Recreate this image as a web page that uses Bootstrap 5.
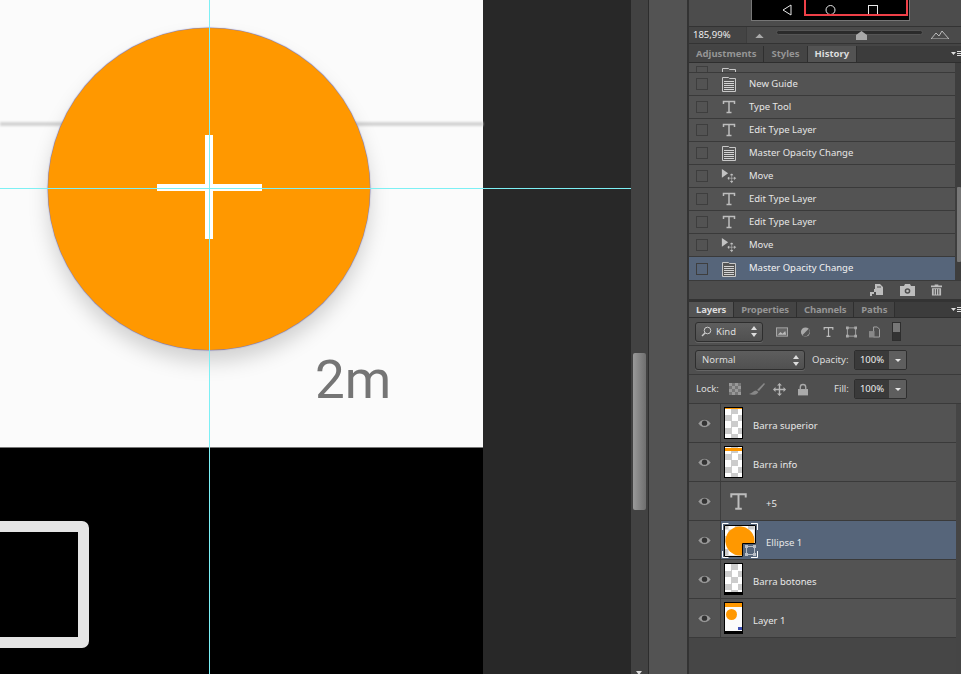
<!DOCTYPE html>
<html lang="en">
<head>
<meta charset="UTF-8" />
<title>Photoshop</title>
<link href="https://cdn.jsdelivr.net/npm/bootstrap@5.3.0/dist/css/bootstrap.min.css" rel="stylesheet" />
<style>
html, body { height: 100%; }
body { width: 961px; height: 674px; overflow: hidden; background: #535353; font-family: "Noto Sans", "Liberation Sans", sans-serif; font-size: 9.5px; color: #e6e6e6; }
.canvas-area { width: 631px; height: 674px; background: #282828; position: relative; overflow: hidden; flex: none; }
.doc-white { width: 483px; height: 448px; background: #fbfbfb; border-bottom: 1px solid #777; }
.doc-black { width: 483px; height: 226px; background: #000; }
.app-line { position: absolute; left: 0; top: 122px; width: 483px; height: 4px; background: #d4d4d4; filter: blur(1px); }
.fab { position: absolute; left: 48px; top: 28px; width: 322px; height: 322px; border-radius: 50%; background: #ff9800; box-shadow: 0 0 1px .5px #7a74b0, 0 12px 20px rgba(0,0,0,.17); }
.plus-v { position: absolute; left: 205px; top: 135px; width: 8px; height: 104px; background: #fff; }
.plus-h { position: absolute; left: 157px; top: 184px; width: 105px; height: 7px; background: #fff; }
.time-label { position: absolute; left: 315px; top: 346px; font: 53px/1.3 Roboto, sans-serif; color: #757575; filter: blur(.4px); }
.nav-square { position: absolute; left: -60px; top: 521px; width: 149px; height: 127px; border: 11px solid #e4e4e4; border-radius: 7px; filter: blur(.3px); }
.guide-v { position: absolute; left: 209px; top: 0; width: 1px; height: 674px; background: #7df0f5; }
.guide-h { position: absolute; left: 0; top: 188px; width: 631px; height: 1px; background: #7df0f5; }
.v-gutter { width: 18px; height: 674px; background: #424242; border-right: 1px solid #2d2d2d; position: relative; flex: none; }
.v-thumb { position: absolute; left: 2px; top: 353px; width: 13px; height: 157px; border-radius: 2px; background: linear-gradient(90deg, #999, #6f6f6f); }
.v-arrow { position: absolute; left: 5px; top: 671px; border: 3px solid transparent; border-top: 4px solid #ddd; }
.dock-strip { width: 40px; height: 674px; background: #535353; border-right: 2px solid #333; flex: none; }
.side-panel { width: 272px; height: 674px; background: #454545; flex: none; }
.nav-preview { height: 26px; background: #4c4c4c; padding-left: 62px; flex: none; }
.nav-black { width: 159px; height: 21px; background: #000; border: 1px solid #777; border-top: 0; position: relative; }
.nav-red { position: absolute; left: 52px; top: -2px; width: 104px; height: 18px; border: 2px solid #ef4048; }
.nav-glyph { position: absolute; top: 4px; }
.zoom-row { height: 18px; background: #4a4a4a; border-top: 1px solid #333; border-bottom: 1px solid #333; flex: none; }
.zoom-val { width: 58px; padding-left: 4px; color: #eee; background: #444; height: 100%; line-height: 16px; border-right: 1px solid #3d3d3d; }
.zoom-track { width: 147px; height: 5px; margin: 0 8px 5px 12px; background: #2b2b2b; border: 1px solid #555; border-radius: 3px; position: relative; }
.zoom-knob { position: absolute; left: 79px; top: 0; }
.tab-strip { height: 17px; background: #3c3c3c; margin-top: 2px; flex: none; position: relative; border-bottom: 1px solid #2e2e2e; }
.tab-item { height: 100%; padding: 0 7px; line-height: 15px; color: #959595; font-weight: 700; background: #444; border-right: 1px solid #2f2f2f; }
.tab-item.active-tab { background: #535353; color: #ddd; }
.layer-tabs { height: 16px; margin-top: 0; }
.layer-tabs .tab-item { letter-spacing: -.15px; }
.tab-menu { position: absolute; right: 0; top: 4px; }
.hist-wrap { height: 217px; flex: none; }
.hist-list { flex: 1; overflow: hidden; }
.hist-scroll { width: 6px; background: #3e3e3e; padding-top: 124px; flex: none; }
.hist-thumb { height: 75px; margin-left: 2px; background: #777; border-radius: 1px; }
.hist-row { height: 23px; background: #535353; border-bottom: 1px solid #3a3a3a; padding-left: 7px; }
.hist-row.clip-row { height: 10px; align-items: flex-end !important; overflow: hidden; }
.hist-row.sel-row { background: #56657a; border-bottom: 0; color: #f2f2f2; }
.hist-box { width: 12px; height: 12px; border: 1px solid #3e3e3e; margin-right: 13px; flex: none; }
.hist-ico { width: 16px; height: 16px; margin-right: 12px; flex: none; }
.hist-foot { height: 19px; background: #4d4d4d; border-top: 1px solid #3a3a3a; padding-right: 19px; flex: none; gap: 16px; }
.gap-bar { height: 3px; background: #333; flex: none; }
.tool-row { background: #4f4f4f; border-bottom: 1px solid #3a3a3a; flex: none; padding-left: 6px; }
.sel-field { background: linear-gradient(#5e5e5e, #505050); border: 1px solid #2e2e2e; border-radius: 3px; height: 20px; color: #ddd; padding: 0 5px; line-height: 18px; box-shadow: 0 1px 0 #666; }
.sel-field.blend-field { width: 110px; padding-left: 6px; }
.updown { margin-left: auto; flex: none; }
.filter-icons { margin-left: 13px; gap: 12px; }
.filter-toggle { width: 9px; height: 19px; background: linear-gradient(#777 50%, #333 50%); border: 1px solid #2e2e2e; }
.opa-label { margin-left: 7px; width: 42px; color: #ddd; }
.lock-label { width: 34px; color: #ddd; padding-left: 1px; }
.lock-icons { gap: 8px; width: 105px; }
.lock-check { width: 12px; height: 12px; background-image: conic-gradient(#777 25%, #999 0 50%, #777 0 75%, #999 0); background-size: 6px 6px; }
.fill-label { width: 20px; color: #ddd; }
.num-field { width: 53px; height: 20px; border: 1px solid #2e2e2e; border-radius: 2px; overflow: hidden; flex: none; }
.num-val { width: 34px; background: #3a3a3a; color: #eee; text-align: center; line-height: 18px; }
.num-btn { flex: 1; background: #5e5e5e; position: relative; }
.num-btn::after { content: ""; position: absolute; left: 6px; top: 8px; border: 3px solid transparent; border-top: 3px solid #e6e6e6; }
.layer-row { height: 39px; background: #535353; border-bottom: 1px solid #3a3a3a; margin-right: 5px; }
.layer-row.sel-row { background: #56657a; }
.eye-cell { width: 32px; height: 100%; background: #535353; border-right: 1px solid #3d3d3d; flex: none; }
.thumb-cell { width: 29px; margin-left: 3px; flex: none; }
.thumb-cell.wide-cell { width: 42px; }
.mini-thumb { width: 19px; height: 32px; border: 1px solid #000; background-color: #fff; background-image: conic-gradient(#ccc 25%, #fff 0 50%, #ccc 0 75%, #fff 0); background-size: 13px 13px; position: relative; overflow: hidden; display: block; }
.mini-thumb.photo-thumb { background: #fbfbfb; }
.layer-name { color: #e8e8e8; margin-top: 6px; }
.type-thumb { margin-left: 7px; margin-right: 17px; flex: none; }
.orange-strip { position: absolute; left: 0; right: 0; background: #ff9800; }
.mask-thumb { width: 36px; height: 35px; margin-left: -2px; }
.layer-foot { flex: 1; background: #464646; margin-right: 5px; }
</style>
</head>
<body class="d-flex">
  <svg width="0" height="0" class="position-absolute">
    <symbol id="ico-doc" viewBox="0 0 16 16"><path d="M1.500 1.500h6l1 1h6v13h-13z" fill="#555" stroke="#c8c8c8"/><path d="M3 5.500h10M3 7.500h10M3 9.500h10M3 11.500h10M3 13.500h10" stroke="#d4d4d4"/></symbol>
    <symbol id="ico-type" viewBox="0 0 16 16"><path d="M2.500 5V2.500h11V5M8 2.500v11M5.500 13.500h5" fill="none" stroke="#bdbdbd" stroke-width="1.500"/></symbol>
    <symbol id="ico-move" viewBox="0 0 18 16"><path d="M1 0l7 5-7 5z" fill="#c4c4c4"/><path d="M12 6v9M8 10.500h8M12 5.500l-1.500 1.500h3zM12 15.500l-1.500-1.500h3zM7.500 10.500l1.500-1.500v3zM16.500 10.500l-1.500-1.500v3z" fill="#c4c4c4" stroke="#c4c4c4" stroke-width=".6"/></symbol>
    <symbol id="ico-eye" viewBox="0 0 14 10"><path d="M1 5c3-5 9-5 12 0-3 5-9 5-12 0z" fill="#9a9a9a" stroke="#3e3e3e" stroke-width=".5"/><circle cx="7" cy="4.700" r="2.500" fill="#333"/></symbol>
    <symbol id="ico-updown" viewBox="0 0 6 11"><path d="M3 0l3 4H0zM3 11L0 7h6z" fill="#ddd"/></symbol>
    <symbol id="ico-menu" viewBox="0 0 10 8"><path d="M0 2h5L2.500 5z" fill="#ddd"/><path d="M6 1.500h4M6 3.500h4M6 5.500h4" stroke="#ddd"/></symbol>
  </svg>

  <div class="canvas-area">
    <div class="doc-white"></div>
    <div class="doc-black"></div>
    <div class="app-line"></div>
    <div class="fab"></div>
    <div class="plus-v"></div>
    <div class="plus-h"></div>
    <div class="time-label">2m</div>
    <div class="nav-square"></div>
    <div class="guide-v"></div>
    <div class="guide-h"></div>
  </div>

  <div class="v-gutter"><div class="v-thumb"></div><div class="v-arrow"></div></div>
  <div class="dock-strip"></div>

  <div class="side-panel d-flex flex-column">
    <div class="nav-preview">
      <div class="nav-black">
        <svg class="nav-glyph" style="left:30px" width="10" height="12" viewBox="0 0 10 12"><path d="M9 1v10L1 6z" fill="none" stroke="#e8e8e8"/></svg>
        <svg class="nav-glyph" style="left:73px" width="11" height="12" viewBox="0 0 11 12"><circle cx="5.500" cy="6" r="4.500" fill="none" stroke="#e8e8e8"/></svg>
        <svg class="nav-glyph" style="left:116px" width="10" height="12" viewBox="0 0 10 12"><rect x=".5" y="1.500" width="9" height="9" fill="none" stroke="#e8e8e8"/></svg>
        <div class="nav-red"></div>
      </div>
    </div>
    <div class="zoom-row d-flex align-items-center">
      <div class="zoom-val">185,99%</div>
      <svg class="ms-2" width="9" height="5" viewBox="0 0 10 6"><path d="M0 6l5-5 5 5z" fill="#aaa"/></svg>
      <div class="zoom-track"><svg class="zoom-knob" width="11" height="9" viewBox="0 0 11 9"><path d="M5.500 0L11 4v5H0V4z" fill="#a8a8a8"/></svg></div>
      <svg width="18" height="8" viewBox="0 0 18 8"><path d="M0 8l5-6 3 3 3-5 7 8z" fill="none" stroke="#bbb"/></svg>
    </div>

    <div class="tab-strip d-flex">
      <div class="tab-item">Adjustments</div>
      <div class="tab-item">Styles</div>
      <div class="tab-item active-tab">History</div>
      <svg class="tab-menu" width="10" height="8"><use href="#ico-menu"/></svg>
    </div>
    <div class="hist-wrap d-flex">
      <div class="hist-list" id="hist-list"></div>
      <div class="hist-scroll"><div class="hist-thumb"></div></div>
    </div>
    <div class="hist-foot d-flex align-items-center justify-content-end">
      <svg width="14" height="12" viewBox="0 0 14 12"><path d="M5 0h5l3 3v8H6V8H4V5h1zM0 8h4v2H2v2H0z" fill="#bdbdbd"/><path d="M7 3h4" stroke="#4d4d4d"/></svg>
      <svg width="15" height="12" viewBox="0 0 15 12"><path d="M0 2h4l1-2h5l1 2h4v10H0z" fill="#bdbdbd"/><circle cx="7.500" cy="7" r="2.800" fill="#4d4d4d"/><circle cx="7.500" cy="7" r="1.300" fill="#bdbdbd"/></svg>
      <svg width="11" height="12" viewBox="0 0 12 12"><path d="M4 0h4v1h4v2H0V1h4zM1 4h10v8H1z" fill="#bdbdbd"/><path d="M3.500 5v6M6 5v6M8.500 5v6" stroke="#4d4d4d"/></svg>
    </div>
    <div class="gap-bar"></div>

    <div class="tab-strip layer-tabs d-flex">
      <div class="tab-item active-tab">Layers</div>
      <div class="tab-item">Properties</div>
      <div class="tab-item">Channels</div>
      <div class="tab-item">Paths</div>
      <svg class="tab-menu" width="10" height="8"><use href="#ico-menu"/></svg>
    </div>

    <div class="tool-row d-flex align-items-center" style="height:28px">
      <div class="sel-field d-flex align-items-center" style="width:68px">
        <svg class="me-1" width="11" height="11" viewBox="0 0 11 11"><circle cx="6.500" cy="4.500" r="3.300" fill="none" stroke="#ccc"/><path d="M4 7L1 10" stroke="#ccc" stroke-width="1.500"/></svg>Kind
        <svg class="updown" width="6" height="11"><use href="#ico-updown"/></svg>
      </div>
      <div class="d-flex align-items-center filter-icons">
        <svg width="12" height="12" viewBox="0 0 13 12"><rect x=".5" y="1.500" width="12" height="9" fill="#666" stroke="#aaa"/><path d="M2 9l3-3 2 2 3-3 1 4z" fill="#bbb"/></svg>
        <svg width="11" height="12" viewBox="0 0 12 12"><circle cx="6" cy="6" r="5" fill="#aaa"/><path d="M9.500 2.500a5 5 0 0 1-7 7z" fill="#555"/></svg>
        <svg width="11" height="12" viewBox="1 1 14 14"><use href="#ico-type" width="16" height="16"/></svg>
        <svg width="11" height="12" viewBox="0 0 12 12"><path d="M1.500 1.500h9v9h-9z" fill="none" stroke="#aaa"/><path d="M0 0h3v3H0zM9 0h3v3H9zM0 9h3v3H0zM9 9h3v3H9z" fill="#aaa"/></svg>
        <svg width="11" height="12" viewBox="0 0 12 12"><path d="M5 .5h4l2.500 2.500v8.500H5z" fill="none" stroke="#aaa"/><path d="M0 5h6v7H0z" fill="#888"/></svg>
        <div class="filter-toggle"></div>
      </div>
    </div>

    <div class="tool-row d-flex align-items-center" style="height:29px">
      <div class="sel-field blend-field d-flex align-items-center">Normal<svg class="updown" width="6" height="11"><use href="#ico-updown"/></svg></div>
      <span class="opa-label">Opacity:</span>
      <div class="num-field d-flex"><div class="num-val">100%</div><div class="num-btn"></div></div>
    </div>

    <div class="tool-row d-flex align-items-center" style="height:29px">
      <span class="lock-label">Lock:</span>
      <div class="d-flex align-items-center lock-icons">
        <div class="lock-check"></div>
        <svg width="16" height="12" viewBox="0 0 16 12"><path d="M15 0L8 7l2 1 6-7zM7 7.500C4 8 4 10 0 11c3 1.500 8 1 9.500-2z" fill="#888"/></svg>
        <svg width="13" height="13" viewBox="0 0 13 13"><path d="M6.500 0L9 2.500H7.200v3.300h3.300V4L13 6.500 10.500 9V7.200H7.200v3.300H9L6.500 13 4 10.500h1.800V7.200H2.500V9L0 6.500 2.500 4v1.800h3.300V2.500H4z" fill="#b5b5b5"/></svg>
        <svg class="ms-1" width="10" height="13" viewBox="0 0 11 13"><path d="M2.500 6V4a3 3 0 0 1 6 0v2" fill="none" stroke="#aaa" stroke-width="1.500"/><path d="M0 6h11v7H0z" fill="#aaa"/></svg>
      </div>
      <span class="fill-label">Fill:</span>
      <div class="num-field d-flex"><div class="num-val">100%</div><div class="num-btn"></div></div>
    </div>

    <div class="layer-list flex-none">
      <div class="layer-row d-flex align-items-center">
        <div class="eye-cell d-flex align-items-center justify-content-center"><svg width="15" height="11"><use href="#ico-eye"/></svg></div>
        <div class="thumb-cell"><span class="mini-thumb"><span class="orange-strip" style="top:0;height:1px"></span></span></div>
        <span class="layer-name">Barra superior</span>
      </div>
      <div class="layer-row d-flex align-items-center">
        <div class="eye-cell d-flex align-items-center justify-content-center"><svg width="15" height="11"><use href="#ico-eye"/></svg></div>
        <div class="thumb-cell"><span class="mini-thumb"><span class="orange-strip" style="top:1px;height:3px"></span></span></div>
        <span class="layer-name">Barra info</span>
      </div>
      <div class="layer-row d-flex align-items-center">
        <div class="eye-cell d-flex align-items-center justify-content-center"><svg width="15" height="11"><use href="#ico-eye"/></svg></div>
        <svg class="type-thumb" width="21" height="21"><use href="#ico-type"/></svg>
        <span class="layer-name">+5</span>
      </div>
      <div class="layer-row sel-row d-flex align-items-center">
        <div class="eye-cell d-flex align-items-center justify-content-center"><svg width="15" height="11"><use href="#ico-eye"/></svg></div>
        <div class="thumb-cell wide-cell">
          <svg class="mask-thumb d-block" viewBox="0 0 36 35">
            <defs><pattern id="chk" width="13" height="13" patternUnits="userSpaceOnUse"><rect width="13" height="13" fill="#fff"/><rect width="6.500" height="6.500" fill="#ccc"/><rect x="6.500" y="6.500" width="6.500" height="6.500" fill="#ccc"/></pattern></defs>
            <rect x="2" y="2" width="32" height="32" fill="url(#chk)"/>
            <circle cx="18" cy="18" r="14.500" fill="#ff9800"/>
            <rect x="21" y="21" width="14" height="14" fill="#56657a"/>
            <path d="M2.500 2.500h31v18h-13v13h-18z" fill="none" stroke="#000"/>
            <rect x="24.500" y="23.500" width="8" height="8" fill="none" stroke="#b9bec6"/>
            <path d="M23 22h3v3h-3zM31 22h3v3h-3zM23 30h3v3h-3zM31 30h3v3h-3z" fill="#b9bec6"/>
            <path d="M.5 7V.5h6M29 .5h6.500v6.500M.5 28v6.500h6M29 34.500h6.500v-6.500" fill="none" stroke="#fff"/>
          </svg>
        </div>
        <span class="layer-name">Ellipse 1</span>
      </div>
      <div class="layer-row d-flex align-items-center">
        <div class="eye-cell d-flex align-items-center justify-content-center"><svg width="15" height="11"><use href="#ico-eye"/></svg></div>
        <div class="thumb-cell"><span class="mini-thumb"><span class="orange-strip" style="bottom:0;height:2px;background:#000"></span></span></div>
        <span class="layer-name">Barra botones</span>
      </div>
      <div class="layer-row d-flex align-items-center">
        <div class="eye-cell d-flex align-items-center justify-content-center"><svg width="15" height="11"><use href="#ico-eye"/></svg></div>
        <div class="thumb-cell">
          <span class="mini-thumb photo-thumb">
            <span class="orange-strip" style="top:0;height:4px"></span>
            <span class="orange-strip" style="top:6px;left:1px;right:auto;width:11px;height:11px;border-radius:50%"></span>
            <span class="orange-strip" style="bottom:0;height:2px;background:#000"></span>
            <span class="orange-strip" style="bottom:3px;left:13px;right:auto;width:4px;height:3px;background:#3f51b5"></span>
          </span>
        </div>
        <span class="layer-name">Layer 1</span>
      </div>
    </div>
    <div class="layer-foot"></div>
  </div>

  <script src="https://cdn.jsdelivr.net/npm/bootstrap@5.3.0/dist/js/bootstrap.bundle.min.js"></script>
  <script>
    const historial = [
      ['doc', 'New Guide'], ['type', 'Type Tool'], ['type', 'Edit Type Layer'], ['doc', 'Master Opacity Change'],
      ['move', 'Move'], ['type', 'Edit Type Layer'], ['type', 'Edit Type Layer'], ['move', 'Move'], ['doc', 'Master Opacity Change']
    ];
    const lista = document.getElementById('hist-list');
    let html = '<div class="hist-row clip-row d-flex"><div class="hist-box" style="margin-bottom:-6px"></div><svg class="hist-ico" style="margin-bottom:-11px"><use href="#ico-doc"/></svg></div>';
    historial.forEach((h, i) => {
      const sel = i === historial.length - 1 ? ' sel-row' : '';
      html += `<div class="hist-row${sel} d-flex align-items-center"><div class="hist-box"></div><svg class="hist-ico"><use href="#ico-${h[0]}"/></svg><span>${h[1]}</span></div>`;
    });
    lista.innerHTML = html;
  </script>
</body>
</html>
